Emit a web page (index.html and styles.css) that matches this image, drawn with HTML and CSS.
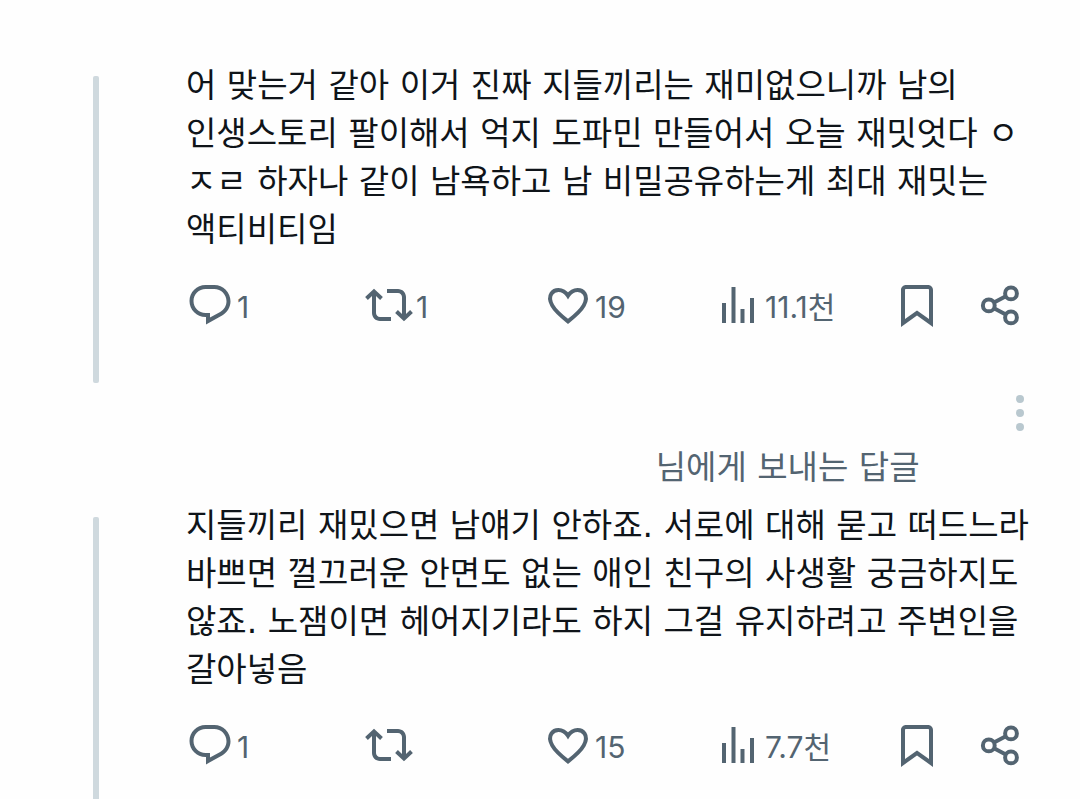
FILE: index.html
```html
<!DOCTYPE html>
<html lang="ko">
<head>
<meta charset="utf-8">
<meta name="viewport" content="width=device-width, initial-scale=1">
<title>답글</title>
<link rel="stylesheet" href="styles.css">
</head>
<body>
<svg class="sprite" aria-hidden="true">
  <symbol id="reply" viewBox="0 0 24 24"><path d="M1.751 10c0-4.42 3.584-8 8.005-8h4.366c4.49 0 8.129 3.64 8.129 8.13 0 2.96-1.607 5.68-4.196 7.11l-8.054 4.46v-3.69h-.067c-4.49.1-8.183-3.51-8.183-8.01zm8.005-6c-3.317 0-6.005 2.69-6.005 6 0 3.37 2.77 6.08 6.138 6.01l.351-.01h1.761v2.3l5.087-2.81c1.951-1.08 3.163-3.13 3.163-5.36 0-3.39-2.744-6.13-6.129-6.13H9.756z"/></symbol>
  <symbol id="repost" viewBox="0 0 24 24"><path d="M4.5 3.88l4.432 4.14-1.364 1.46L5.5 7.55V16c0 1.1.896 2 2 2H13v2H7.5c-2.209 0-4-1.79-4-4V7.55L1.432 9.48.068 8.02 4.5 3.88zM16.5 6H11V4h5.5c2.209 0 4 1.79 4 4v8.45l2.068-1.93 1.364 1.46-4.432 4.14-4.432-4.14 1.364-1.46 2.068 1.93V8c0-1.1-.896-2-2-2z"/></symbol>
  <symbol id="like" viewBox="0 0 24 24"><path fill="none" stroke="currentColor" stroke-width="2" d="M12 20.2C8.2 17.2 5.4 14.6 4.1 12.2 2.8 9.8 2.7 7.8 3.7 6.3 4.5 5.1 5.8 4.5 7.2 4.5c1.9 0 3.6 1 4.8 2.9 1.2-1.9 2.9-2.9 4.8-2.9 1.4 0 2.7.6 3.5 1.8 1 1.5.9 3.5-.4 5.9-1.3 2.4-4.1 5-7.9 8z"/></symbol>
  <symbol id="views" viewBox="0 0 24 24"><path d="M8.75 21V3h2v18h-2zM18 21V8.5h2V21h-2zM4 21V11h2v10H4zm9.248 0v-7h2v7h-2z"/></symbol>
  <symbol id="bookmark" viewBox="0 0 24 24"><path d="M4 4.5C4 3.12 5.119 2 6.5 2h11C18.881 2 20 3.12 20 4.5v18.44l-8-5.71-8 5.71V4.5zM6.5 4c-.276 0-.5.22-.5.5v14.56l6-4.29 6 4.29V4.5c0-.28-.224-.5-.5-.5h-11z"/></symbol>
  <symbol id="share" viewBox="0 0 24 24"><g fill="none" stroke="currentColor" stroke-width="2"><circle cx="6.4" cy="12.2" r="2.95"/><circle cx="17.5" cy="6.2" r="2.95"/><circle cx="17.5" cy="18.2" r="2.95"/><path d="M9 10.8l5.9-3.2M9 13.6l5.9 3.2"/></g></symbol>
  <symbol id="more" viewBox="0 0 8 36"><circle cx="4" cy="4" r="4"/><circle cx="4" cy="18" r="4"/><circle cx="4" cy="32" r="4"/></symbol>
</svg>
<main class="thread">
  <article class="post">
    <div class="rail"></div>
    <div class="content">
      <p class="text">어 맞는거 같아 이거 진짜 지들끼리는 재미없으니까 남의<br>인생스토리 팔이해서 억지 도파민 만들어서 오늘 재밋엇다 ㅇ<br>ㅈㄹ 하자나 같이 남욕하고 남 비밀공유하는게 최대 재밋는<br>액티비티임</p>
      <div class="actions">
        <button class="action" aria-label="답글 1"><svg class="icon"><use href="#reply"/></svg><span class="count">1</span></button>
        <button class="action" aria-label="재게시 1"><svg class="icon"><use href="#repost"/></svg><span class="count">1</span></button>
        <button class="action" aria-label="마음에 들어요 19"><svg class="icon"><use href="#like"/></svg><span class="count">19</span></button>
        <button class="action" aria-label="조회수 11.1천"><svg class="icon"><use href="#views"/></svg><span class="count">11.1천</span></button>
        <button class="action" aria-label="북마크"><svg class="icon"><use href="#bookmark"/></svg></button>
        <button class="action" aria-label="공유"><svg class="icon"><use href="#share"/></svg></button>
      </div>
    </div>
  </article>
  <article class="post reply">
    <div class="rail"></div>
    <div class="content">
      <button class="more" aria-label="더 보기"><svg class="dots"><use href="#more"/></svg></button>
      <p class="context">님에게 보내는 답글</p>
      <p class="text">지들끼리 재밌으면 남얘기 안하죠. 서로에 대해 묻고 떠드느라<br>바쁘면 껄끄러운 안면도 없는 애인 친구의 사생활 궁금하지도<br>않죠. 노잼이면 헤어지기라도 하지 그걸 유지하려고 주변인을<br>갈아넣음</p>
      <div class="actions">
        <button class="action" aria-label="답글 1"><svg class="icon"><use href="#reply"/></svg><span class="count">1</span></button>
        <button class="action" aria-label="재게시"><svg class="icon"><use href="#repost"/></svg></button>
        <button class="action" aria-label="마음에 들어요 15"><svg class="icon"><use href="#like"/></svg><span class="count">15</span></button>
        <button class="action" aria-label="조회수 7.7천"><svg class="icon"><use href="#views"/></svg><span class="count">7.7천</span></button>
        <button class="action" aria-label="북마크"><svg class="icon"><use href="#bookmark"/></svg></button>
        <button class="action" aria-label="공유"><svg class="icon"><use href="#share"/></svg></button>
      </div>
    </div>
  </article>
</main>
</body>
</html>
```
FILE: styles.css
```css
* {
  box-sizing: border-box;
}

body {
  margin: 0;
  background: #fefefe;
  color: #0f1419;
  font-family: "DejaVu Sans", "Noto Sans CJK KR", sans-serif;
}

.sprite {
  display: none;
}

.thread {
  display: flex;
  flex-direction: column;
  min-height: 100vh;
  padding-top: 62px;
}

.post {
  display: grid;
  grid-template-columns: 6px minmax(0, 1fr);
  column-gap: 87px;
  padding: 0 40px 0 93px;
}

.post .content {
  padding-bottom: 54px;
}

.rail {
  margin-top: 14px;
  border-radius: 2px;
  background: #cfd9de;
}

.reply {
  flex: 1;
  padding-top: 12px;
}

.reply .content {
  padding-bottom: 24px;
}

.reply .rail {
  margin-top: 122px;
  border-radius: 2px 2px 0 0;
}

.text,
.context {
  margin: 0;
  font-size: 33px;
  line-height: 48px;
  word-break: keep-all;
}

.context {
  margin: 13px 0 10px 55%;
  color: #536471;
}

.actions {
  display: grid;
  grid-template-columns: 179fr 179fr 170fr 179fr 83fr 48px;
  margin-top: 27px;
  padding-right: 16px;
}

.action {
  display: flex;
  align-items: center;
  gap: 3px;
  height: 48px;
  padding: 0;
  border: 0;
  background: none;
  color: #536471;
  font-family: Inter, "Noto Sans CJK KR", sans-serif;
  font-size: 30px;
  line-height: 44px;
  white-space: nowrap;
}

.count {
  padding-top: 4px;
}

.icon {
  flex: none;
  width: 48px;
  height: 48px;
  fill: currentColor;
}

.more {
  display: block;
  margin: 0 16px 0 auto;
  padding: 0;
  border: 0;
  background: none;
  color: #b9c8cf;
}

.dots {
  display: block;
  width: 8px;
  height: 36px;
  fill: currentColor;
}
```
